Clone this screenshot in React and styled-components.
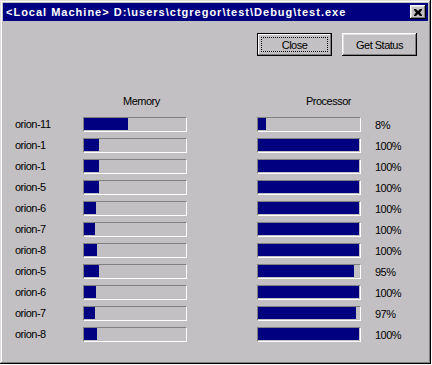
import React from 'react';
import styled, { createGlobalStyle } from 'styled-components';

const Global = createGlobalStyle`
  html, body {
    margin: 0;
    padding: 0;
    background: #ffffff;
  }
  body {
    font-family: "Liberation Sans", Arial, sans-serif;
    font-size: 11px;
    letter-spacing: -0.5px;
    color: #000;
  }
`;

const gray = '#c3c0c3';

const Window = styled.div`
  box-sizing: border-box;
  width: 431px;
  height: 364px;
  padding: 3px;
  background: ${gray};
  box-shadow: inset -1px -1px #000, inset 1px 1px #dfdfdf,
    inset -2px -2px #808080, inset 2px 2px #fff;
  display: flex;
  flex-direction: column;
`;

const TitleBar = styled.div`
  height: 18px;
  background: #000080;
  display: flex;
  align-items: center;
  justify-content: space-between;
  padding: 0 2px 0 3px;
`;

const Title = styled.span`
  color: #fff;
  font-weight: bold;
  font-size: 11px;
  letter-spacing: 1px;
  white-space: nowrap;
`;

const CloseBox = styled.div`
  box-sizing: border-box;
  width: 16px;
  height: 14px;
  background: ${gray};
  box-shadow: inset -1px -1px #000, inset 1px 1px #fff,
    inset -2px -2px #808080, inset 2px 2px #dfdfdf;
  display: flex;
  align-items: center;
  justify-content: center;
`;

const Body = styled.div`
  padding: 12px 11px 0 12px;
  display: flex;
  flex-direction: column;
`;

const ButtonRow = styled.div`
  display: flex;
  justify-content: flex-end;
  gap: 10px;
`;

const Button = styled.button`
  box-sizing: border-box;
  width: 75px;
  height: 23px;
  padding: 0;
  border: 0;
  background: ${gray};
  font: inherit;
  letter-spacing: -0.5px;
  color: #000;
  position: relative;
  box-shadow: ${(p) =>
    p.$default
      ? 'inset 0 0 0 1px #000, inset -2px -2px #808080, inset 2px 2px #fff'
      : 'inset -1px -1px #000, inset 1px 1px #fff, inset -2px -2px #808080, inset 2px 2px #dfdfdf'};
`;

const Focus = styled.span`
  position: absolute;
  inset: 4px;
  border: 1px dotted #000;
  display: flex;
  align-items: center;
  justify-content: center;
`;

const Grid = styled.div`
  display: grid;
  grid-template-columns: 68px 174px 118px 1fr;
  align-items: center;
`;

const Header = styled(Grid)`
  margin-top: 38px;
  height: 13px;
`;

const HeadLabel = styled.span`
  grid-column: ${(p) => p.$col};
  padding-left: ${(p) => p.$indent}px;
`;

const Rows = styled.div`
  margin-top: 7px;
  display: flex;
  flex-direction: column;
`;

const Row = styled(Grid)`
  height: 21px;
`;

const Name = styled.span`
  white-space: nowrap;
  margin-top: -1px;
`;

const Track = styled.div`
  box-sizing: border-box;
  width: 104px;
  height: 15px;
  border-style: solid;
  border-width: 1px;
  border-color: #808080 #fff #fff #808080;
  padding: 0 1px 1px 0;
`;

const Fill = styled.div`
  height: 100%;
  background: #000080;
`;

const Pct = styled.span`
  white-space: nowrap;
`;

const data = [
  ['orion-11', 44, 8],
  ['orion-1', 15, 100],
  ['orion-1', 15, 100],
  ['orion-5', 15, 100],
  ['orion-6', 12, 100],
  ['orion-7', 11, 100],
  ['orion-8', 13, 100],
  ['orion-5', 15, 95],
  ['orion-6', 12, 100],
  ['orion-7', 11, 97],
  ['orion-8', 13, 100],
];

export default function App() {
  return (
    <>
      <Global />
      <Window>
        <TitleBar>
          <Title>{'<Local Machine> D:\\users\\ctgregor\\test\\Debug\\test.exe'}</Title>
          <CloseBox>
            <svg width="8" height="7" viewBox="0 0 8 7">
              <path d="M0 0h2l2 2 2-2h2v1L6 3.5 8 6v1H6L4 5 2 7H0V6l2-2.5L0 1z" fill="#000" />
            </svg>
          </CloseBox>
        </TitleBar>
        <Body>
          <ButtonRow>
            <Button $default>
              <Focus>Close</Focus>
            </Button>
            <Button>Get Status</Button>
          </ButtonRow>
          <Header>
            <HeadLabel $col={2} $indent={40}>Memory</HeadLabel>
            <HeadLabel $col={3} $indent={49}>Processor</HeadLabel>
          </Header>
          <Rows>
            {data.map(([name, mem, cpu], i) => (
              <Row key={i}>
                <Name>{name}</Name>
                <Track>
                  <Fill style={{ width: `${mem}px` }} />
                </Track>
                <Track>
                  <Fill style={{ width: `${cpu}%` }} />
                </Track>
                <Pct>{cpu}%</Pct>
              </Row>
            ))}
          </Rows>
        </Body>
      </Window>
    </>
  );
}
